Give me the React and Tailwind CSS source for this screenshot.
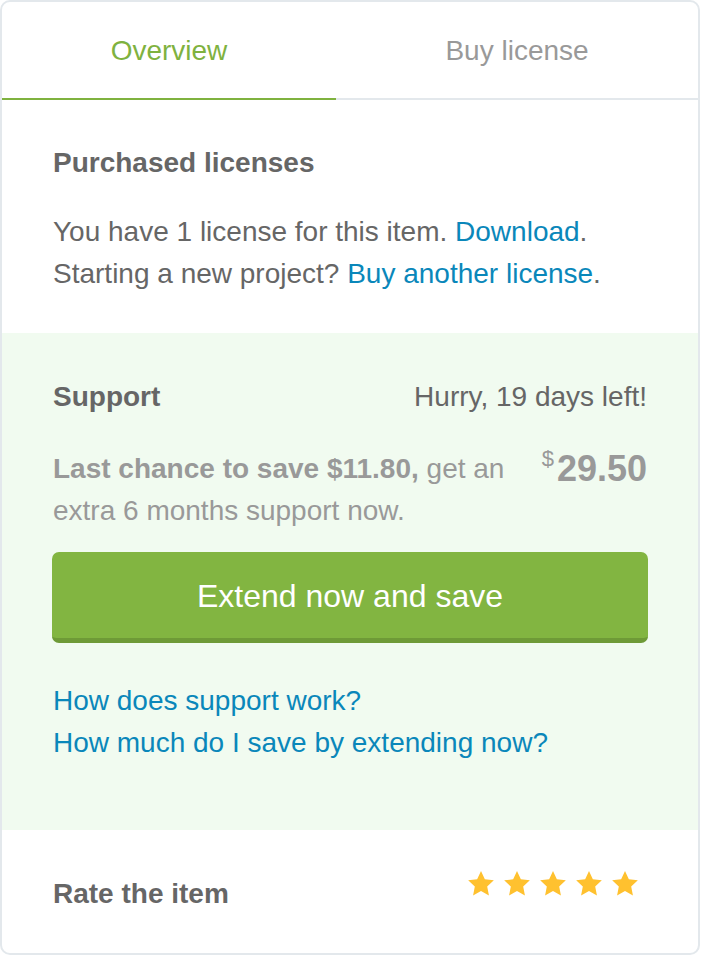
import React from "react";

function Star() {
  return (
    <svg width="28" height="27" viewBox="0 0 24 23" className="block">
      <path
        d="M12 0.8l3.3 7.1 7.7 0.9-5.7 5.3 1.5 7.7L12 17.9l-6.8 3.9 1.5-7.7L1 8.8l7.7-0.9z"
        fill="#ffc12f"
      />
    </svg>
  );
}

export default function App() {
  return (
    <div
      className="w-[700px] h-[955px] border-2 border-[#e3e8ec] rounded-[10px] overflow-hidden bg-white flex flex-col text-[28px] leading-[42px] text-[#666]"
      style={{ fontFamily: '"Liberation Sans", Arial, Helvetica, sans-serif' }}
    >
      {/* Tabs */}
      <div className="flex border-b-2 border-[#e3e8ec] h-[98px]">
        <div className="w-[334px] h-[98px] -mb-[2px] border-b-2 border-[#7fb23f] flex items-center justify-center pt-[2px] text-[#7fb23f]">
          Overview
        </div>
        <div className="flex-1 flex items-center justify-center pt-[2px] text-[#999]">
          Buy license
        </div>
      </div>

      {/* Purchased licenses */}
      <div className="px-[51px] pt-[42px] pb-[38px]">
        <div className="font-bold">Purchased licenses</div>
        <p className="mt-[27px]">
          You have 1 license for this item.{" "}
          <span className="text-[#0a87ba]">Download</span>.
          <br />
          Starting a new project?{" "}
          <span className="text-[#0a87ba]">Buy another license</span>.
        </p>
      </div>

      {/* Support */}
      <div className="bg-[#f1fbf0] px-[51px] pt-[43px] pb-[66px]">
        <div className="flex justify-between">
          <div className="font-bold">Support</div>
          <div>Hurry, 19 days left!</div>
        </div>
        <div className="flex justify-between mt-[30px] text-[#999]">
          <p className="w-[470px]">
            <b className="font-bold">Last chance to save $11.80,</b> get an
            extra 6 months support now.
          </p>
          <div className="font-bold text-[36px] leading-[42px] flex items-start">
            <span className="font-normal text-[22px] leading-[26px] mr-[3px] mt-[-2px]">
              $
            </span>
            29.50
          </div>
        </div>
        <button className="mt-[20px] -mx-[1px] w-[calc(100%+2px)] h-[91px] rounded-[7px] bg-[#82b541] border-b-[5px] border-[#6e9a37] text-white text-[32px] flex items-center justify-center pt-[2px]">
          Extend now and save
        </button>
        <div className="mt-[37px] text-[#0a87ba]">
          <div>How does support work?</div>
          <div>How much do I save by extending now?</div>
        </div>
      </div>

      {/* Rate */}
      <div className="flex-1 px-[51px] flex items-center justify-between">
        <div className="font-bold mt-[4px]">Rate the item</div>
        <div className="flex gap-[8px] mr-[8px] mb-[16px]">
          <Star />
          <Star />
          <Star />
          <Star />
          <Star />
        </div>
      </div>
    </div>
  );
}
